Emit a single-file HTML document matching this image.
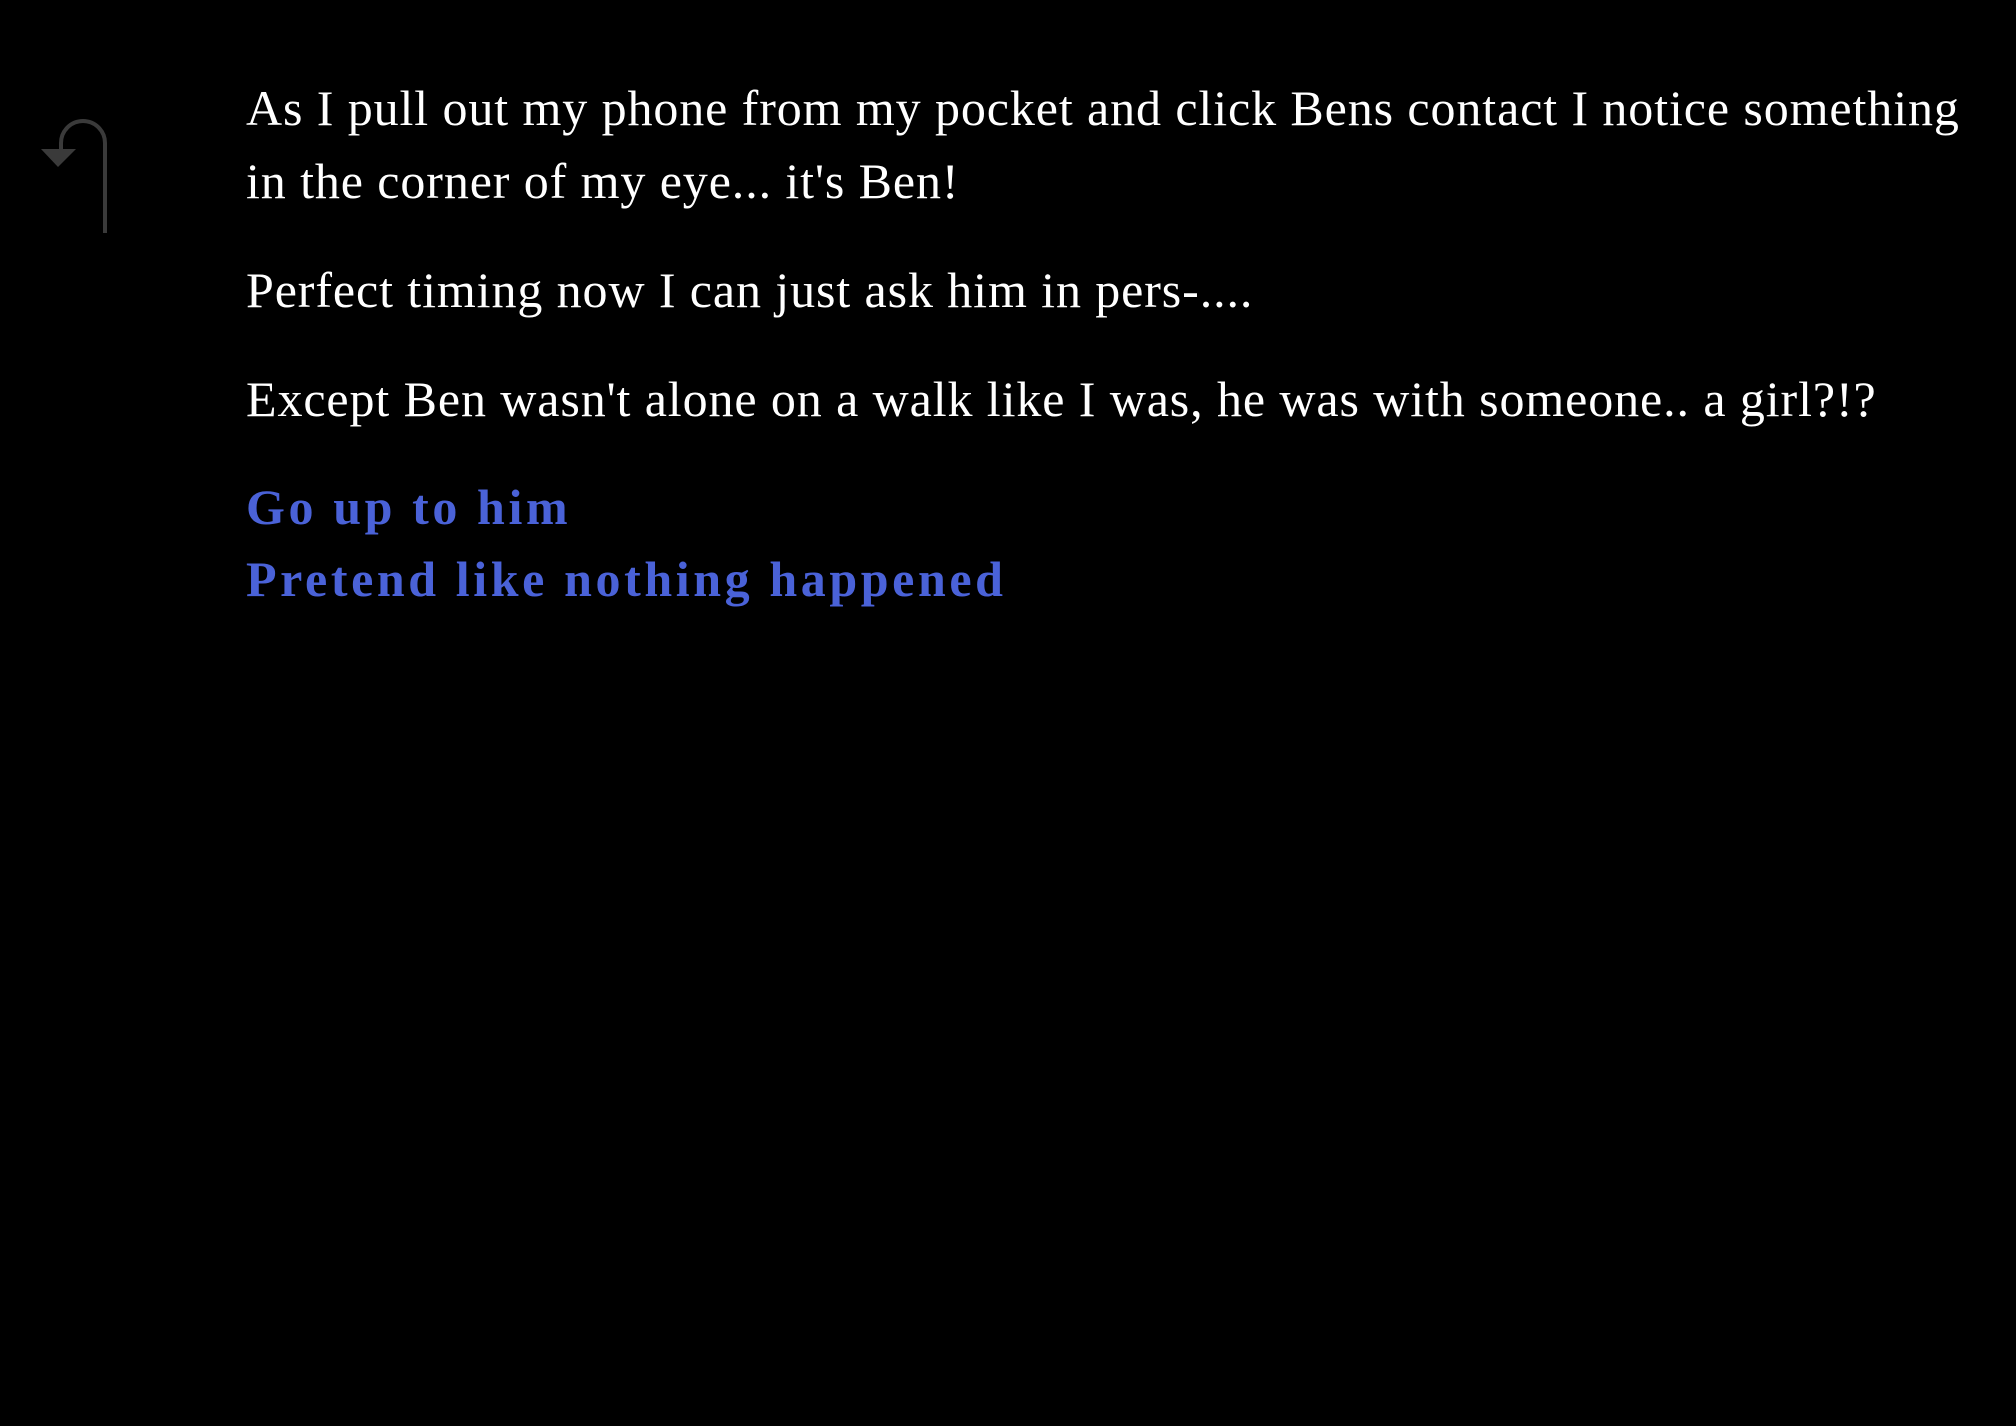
<!DOCTYPE html>
<html><head><style>
html,body{margin:0;padding:0;background:#000;width:2016px;height:1426px;overflow:hidden}
.t{position:absolute;left:246px;font-family:"Liberation Serif",serif;font-size:50px;letter-spacing:0.9px;color:#fff;white-space:nowrap;line-height:73px}
.l{color:#4a62d8;font-weight:bold;letter-spacing:3.6px}
</style></head><body>
<svg style="position:absolute;left:0;top:0" width="200" height="260">
<path d="M105 233 V143 A22 22 0 0 0 61 143 V152" fill="none" stroke="#3a3a3a" stroke-width="4"/>
<path d="M41 149 H76 L58 167 Z" fill="#3a3a3a"/>
</svg>
<div class="t" style="top:72px">As I pull out my phone from my pocket and click Bens contact I notice something</div>
<div class="t" style="top:145px">in the corner of my eye... it's Ben!</div>
<div class="t" style="top:254px">Perfect timing now I can just ask him in pers-....</div>
<div class="t" style="top:363px">Except Ben wasn't alone on a walk like I was, he was with someone.. a girl?!?</div>
<div class="t l" style="top:471px">Go up to him</div>
<div class="t l" style="top:543px">Pretend like nothing happened</div>
</body></html>
